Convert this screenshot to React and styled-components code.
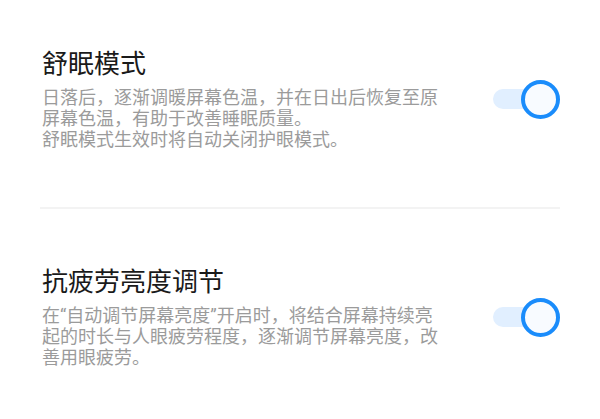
import React from "react";
import styled, { createGlobalStyle } from "styled-components";

const GlobalStyle = createGlobalStyle`
  html, body {
    margin: 0;
    padding: 0;
    background: #ffffff;
  }
  body {
    font-family: Roboto, "Noto Sans CJK SC", "Noto Sans", sans-serif;
    -webkit-font-smoothing: antialiased;
  }
`;

const Page = styled.div`
  width: 600px;
  height: 419px;
  overflow: hidden;
  box-sizing: border-box;
  padding: 0 40px 0 42px;
  background: #ffffff;
`;

const Section = styled.section`
  display: flex;
  align-items: center;
  justify-content: space-between;
  padding: ${(p) => (p.$first ? "48px 0 57px" : "57px 0 40px")};
`;

const TextBlock = styled.div`
  display: flex;
  flex-direction: column;
  gap: 6px;
`;

const Title = styled.h2`
  margin: 0;
  font-size: 26px;
  line-height: 33px;
  font-weight: 400;
  color: #1a1a1a;
`;

const Description = styled.p`
  margin: 0;
  width: 400px;
  font-size: 18px;
  line-height: 21px;
  font-weight: 400;
  color: #9b9b9b;
`;

const Divider = styled.div`
  height: 2px;
  margin-left: -2px;
  background: #f3f3f3;
`;

const SwitchTrack = styled.div`
  position: relative;
  flex: none;
  width: 67px;
  height: 39px;
`;

const SwitchRail = styled.div`
  position: absolute;
  left: 0;
  top: 9.5px;
  width: 54px;
  height: 20px;
  border-radius: 10px;
  background: #e1efff;
`;

const SwitchKnob = styled.div`
  position: absolute;
  right: 0;
  top: 0;
  width: 39px;
  height: 39px;
  box-sizing: border-box;
  border-radius: 50%;
  border: 4.5px solid #1a8cfb;
  background: #f8fbff;
`;

const Toggle = () => (
  <SwitchTrack role="switch" aria-checked="true">
    <SwitchRail />
    <SwitchKnob />
  </SwitchTrack>
);

const settings = [
  {
    title: "舒眠模式",
    lines: [
      "日落后，逐渐调暖屏幕色温，并在日出后恢复至原屏幕色温，有助于改善睡眠质量。",
      "舒眠模式生效时将自动关闭护眼模式。",
    ],
  },
  {
    title: "抗疲劳亮度调节",
    lines: [
      "在“自动调节屏幕亮度”开启时，将结合屏幕持续亮起的时长与人眼疲劳程度，逐渐调节屏幕亮度，改善用眼疲劳。",
    ],
  },
];

export default function App() {
  return (
    <>
      <GlobalStyle />
      <Page lang="zh-CN">
        {settings.map((item, i) => (
          <React.Fragment key={item.title}>
            {i > 0 && <Divider />}
            <Section $first={i === 0}>
              <TextBlock>
                <Title>{item.title}</Title>
                <Description>
                  {item.lines.map((line, j) => (
                    <React.Fragment key={j}>
                      {j > 0 && <br />}
                      {line}
                    </React.Fragment>
                  ))}
                </Description>
              </TextBlock>
              <Toggle />
            </Section>
          </React.Fragment>
        ))}
      </Page>
    </>
  );
}
